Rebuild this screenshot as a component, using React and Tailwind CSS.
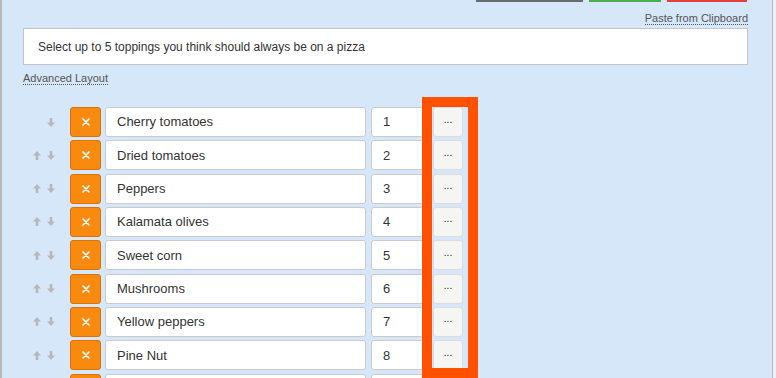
const ROWS = [
  { name: "Cherry tomatoes", n: "1", up: false },
  { name: "Dried tomatoes", n: "2", up: true },
  { name: "Peppers", n: "3", up: true },
  { name: "Kalamata olives", n: "4", up: true },
  { name: "Sweet corn", n: "5", up: true },
  { name: "Mushrooms", n: "6", up: true },
  { name: "Yellow peppers", n: "7", up: true },
  { name: "Pine Nut", n: "8", up: true },
  { name: "", n: "", up: true, cut: true },
];

const Arrow = ({ down }) => (
  <svg width="8" height="9" viewBox="0 0 8 9" className={down ? "rotate-180" : ""}>
    <path d="M4 0 L8 4.5 L5.3 4.5 L5.3 9 L2.7 9 L2.7 4.5 L0 4.5 Z" fill="#b8b8b8" />
  </svg>
);

const Row = ({ name, n, up, cut }) => (
  <div className="flex items-center h-[30px] shrink-0">
    <div className="w-[47px] flex items-center justify-end gap-[6px] pr-[15px]">
      {up && <Arrow />}
      <Arrow down />
    </div>
    <button className="w-[31px] h-[30px] bg-[#f98a10] border border-[#d9720b] rounded-[3px] flex items-center justify-center">
      {!cut && (
        <svg width="8" height="8" viewBox="0 0 8 8">
          <path d="M1 1 L7 7 M7 1 L1 7" stroke="#fff" strokeWidth="1.7" strokeLinecap="round" />
        </svg>
      )}
    </button>
    <div className="ml-[4px] w-[261px] h-[30px] bg-white border border-[#cbcbcb] rounded-[3px] flex items-center pl-[11px] text-[13px] text-[#333]">
      {name}
    </div>
    <div className="ml-[5px] w-[58px] h-[30px] bg-white border border-[#cbcbcb] rounded-[3px] flex items-center pl-[11px] text-[13px] text-[#333]">
      {n}
    </div>
    <button className="ml-[4px] w-[30px] h-[30px] bg-[#f5f5f3] border border-[#dcdcdc] rounded-[3px] flex items-center justify-center text-[10px] leading-none text-[#222] pb-[5px]">
      {cut ? "" : "..."}
    </button>
  </div>
);

export default function App() {
  return (
    <div className="w-[776px] h-[378px] bg-[#eaf1f8] overflow-hidden" style={{ fontFamily: '"Liberation Sans", Arial, sans-serif' }}>
      <div className="relative w-[773px] h-[378px] bg-[#d5e7f8] border-l-2 border-r border-[#b9b9b9] pl-[21px] pr-[24px] overflow-hidden">
        {/* cut-off action buttons */}
        <div className="flex justify-end gap-[6px] pr-[1px] h-[2px]">
          <div className="w-[107px] bg-[#6a6a6a]" />
          <div className="w-[72px] bg-[#4cae4f]" />
          <div className="w-[80px] bg-[#e2403a]" />
        </div>

        <div className="flex justify-end mt-[10px]">
          <span className="text-[11px] leading-[12px] text-[#555] border-b border-dotted border-[#555]">Paste from Clipboard</span>
        </div>

        <div className="mt-[3px] h-[37px] bg-white border border-[#c5c5c5] flex items-center pl-[14px] text-[12px] text-[#333]">
          Select up to 5 toppings you think should always be on a pizza
        </div>

        <div className="flex mt-[7px]">
          <span className="text-[11px] leading-[12px] text-[#555] border-b border-dotted border-[#555]">Advanced Layout</span>
        </div>

        <div className="flex flex-col gap-[3.33px] mt-[22px]">
          {ROWS.map((r, i) => (
            <Row key={i} {...r} />
          ))}
        </div>

        {/* highlight box */}
        <div className="absolute left-[420px] top-[97px] w-[56px] h-[271px] border-[10px] border-b-0 border-[#ff5100]" />
        <div className="absolute left-[420px] top-[368px] w-[56px] h-[20px] bg-[#ff5100]" />
      </div>
    </div>
  );
}
